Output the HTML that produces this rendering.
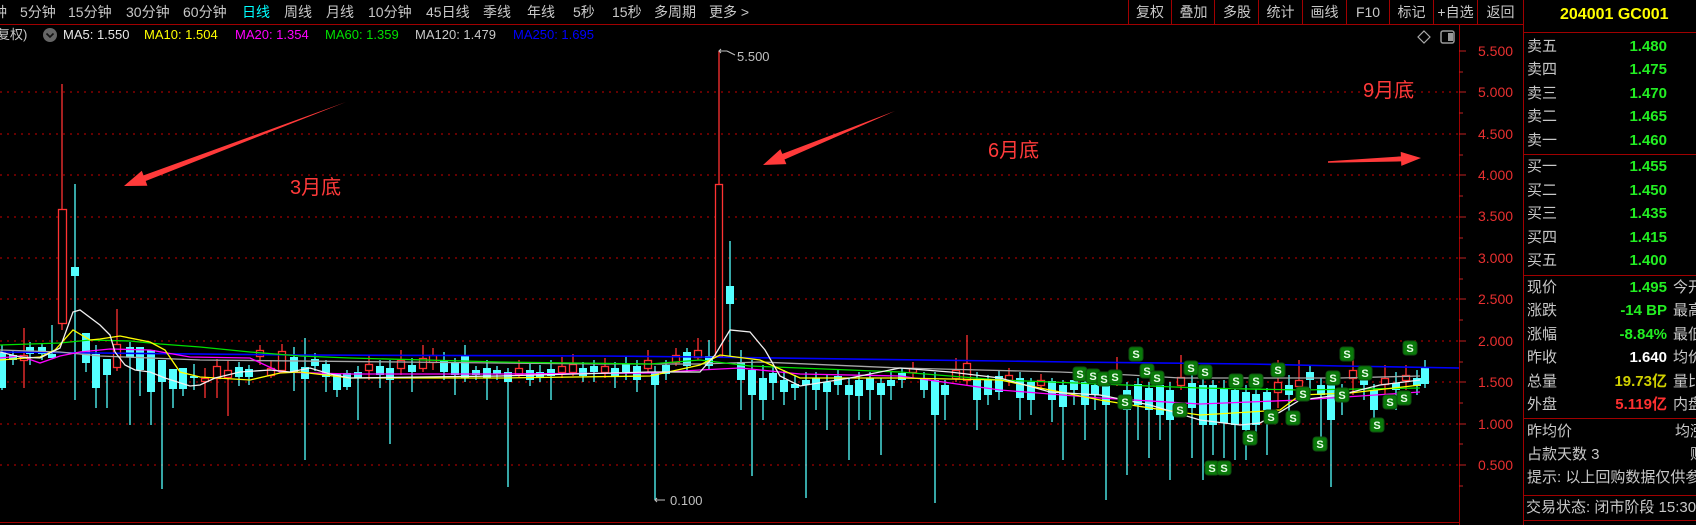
<!DOCTYPE html>
<html><head><meta charset="utf-8"><style>
html,body{margin:0;padding:0;background:#000;width:1696px;height:525px;overflow:hidden;font-family:"Liberation Sans","Noto Sans CJK SC","WenQuanYi Zen Hei",sans-serif}
.t{position:absolute;white-space:nowrap;line-height:1}
.tb{font-size:14px;color:#c8c8c8;top:5px}
.ma{font-size:13px;top:28px}
.pl{font-size:15px;color:#c8c8c8;left:1527px}
.pv{font-size:15px;font-weight:bold;color:#22ee22;text-align:right;width:140px;left:1527px}
.ax{font-size:14px;color:#e83030;left:1478px}
.btn{position:absolute;top:0;height:24px;border-left:1px solid #a00000;color:#c8c8c8;font-size:14px;line-height:24px;text-align:center}
</style></head><body>
<svg width="1696" height="525" style="position:absolute;left:0;top:0">
<g stroke="#a00000" stroke-width="1">
<line x1="0" y1="24.5" x2="1523" y2="24.5"/>
<line x1="1459.5" y1="24" x2="1459.5" y2="525"/>
<line x1="1523.5" y1="0" x2="1523.5" y2="525"/>
<line x1="1523" y1="32.5" x2="1696" y2="32.5"/>
<line x1="1523" y1="154.5" x2="1696" y2="154.5"/>
<line x1="1523" y1="275.5" x2="1696" y2="275.5"/>
<line x1="1523" y1="418.5" x2="1696" y2="418.5"/>
<line x1="1523" y1="495.5" x2="1696" y2="495.5"/>
<line x1="1523" y1="520.5" x2="1696" y2="520.5"/>
<line x1="0" y1="522.5" x2="1459" y2="522.5"/>
</g>
<g stroke="#a00000" stroke-width="1.3" stroke-dasharray="2 5">
<line x1="0" y1="92" x2="1459" y2="92"/><line x1="0" y1="134" x2="1459" y2="134"/>
<line x1="0" y1="175" x2="1459" y2="175"/><line x1="0" y1="217" x2="1459" y2="217"/>
<line x1="0" y1="258" x2="1459" y2="258"/><line x1="0" y1="299" x2="1459" y2="299"/>
<line x1="0" y1="341" x2="1459" y2="341"/><line x1="0" y1="382" x2="1459" y2="382"/>
<line x1="0" y1="424" x2="1459" y2="424"/><line x1="0" y1="465" x2="1459" y2="465"/>
</g>
<path stroke="#c02020" stroke-width="1" d="M1459 51h7M1459 92h7M1459 134h7M1459 175h7M1459 217h7M1459 258h7M1459 299h7M1459 341h7M1459 382h7M1459 424h7M1459 465h7M1459 72h4M1459 113h4M1459 155h4M1459 196h4M1459 238h4M1459 279h4M1459 320h4M1459 362h4M1459 403h4M1459 444h4M1459 486h4"/>
<path stroke="#54ffff" stroke-width="1.3" d="M2 345V390M13 350V365M30 342V365M42 344V360M52 325V358M75 184V400M86 333V372M96 345V408M107 359V408M130 342V425M140 347V396M151 350V425M162 360V489M173 369V408M183 368V396M194 364V390M239 362V386M249 365V385M294 347V391M305 338V460M315 353V371M326 360V392M337 374V397M347 370V390M358 366V420M380 360V388M390 360V444M412 358V392M444 352V380M455 358V395M465 345V382M476 366V380M487 360V400M497 366V380M508 368V487M530 364V386M540 365V382M551 360V400M583 362V382M594 360V382M615 362V388M626 356V380M637 360V392M655 366V500M666 360V380M687 348V372M709 340V370M730 241V357M741 350V410M752 360V476M763 365V420M773 365V400M784 370V405M795 375V400M806 372V498M816 372V410M827 375V430M838 370V395M849 378V460M859 372V420M870 372V420M881 378V455M891 372V400M902 368V388M924 372V398M935 372V503M945 380V420M977 372V430M988 375V405M999 370V400M1020 372V420M1031 378V415M1052 378V422M1063 380V460M1074 374V405M1085 375V440M1095 380V410M1106 380V500M1127 382V475M1138 378V440M1149 382V458M1160 378V440M1170 382V480M1192 375V458M1203 378V480M1213 380V455M1224 380V458M1235 382V460M1246 385V460M1256 385V435M1267 388V455M1289 375V420M1310 366V395M1321 378V440M1331 378V487M1342 384V415M1364 366V400M1374 384V430M1396 372V410M1417 370V395M1425 360V388"/>
<g fill="#54ffff">
<rect x="-2" y="352" width="8" height="36"/><rect x="9" y="355" width="8" height="5"/><rect x="26" y="347" width="8" height="7"/><rect x="38" y="347" width="8" height="7"/><rect x="48" y="354" width="8" height="4"/><rect x="71" y="267" width="8" height="9"/><rect x="82" y="333" width="8" height="30"/><rect x="92" y="354" width="8" height="34"/><rect x="103" y="359" width="8" height="16"/><rect x="126" y="347" width="8" height="10"/><rect x="136" y="347" width="8" height="23"/><rect x="147" y="350" width="8" height="42"/><rect x="158" y="360" width="8" height="22"/><rect x="169" y="369" width="8" height="20"/><rect x="179" y="368" width="8" height="21"/><rect x="190" y="376" width="8" height="2"/><rect x="235" y="367" width="8" height="10"/><rect x="245" y="369" width="8" height="8"/><rect x="290" y="357" width="8" height="15"/><rect x="301" y="367" width="8" height="12"/><rect x="311" y="359" width="8" height="7"/><rect x="322" y="364" width="8" height="13"/><rect x="333" y="374" width="8" height="16"/><rect x="343" y="373" width="8" height="14"/><rect x="354" y="372" width="8" height="6"/><rect x="376" y="366" width="8" height="9"/><rect x="386" y="368" width="8" height="12"/><rect x="408" y="365" width="8" height="7"/><rect x="440" y="360" width="8" height="12"/><rect x="451" y="362" width="8" height="13"/><rect x="461" y="355" width="8" height="23"/><rect x="472" y="370" width="8" height="5"/><rect x="483" y="368" width="8" height="10"/><rect x="493" y="370" width="8" height="4"/><rect x="504" y="372" width="8" height="10"/><rect x="526" y="370" width="8" height="10"/><rect x="536" y="372" width="8" height="6"/><rect x="547" y="369" width="8" height="7"/><rect x="579" y="368" width="8" height="8"/><rect x="590" y="366" width="8" height="6"/><rect x="611" y="368" width="8" height="8"/><rect x="622" y="364" width="8" height="8"/><rect x="633" y="366" width="8" height="14"/><rect x="651" y="372" width="8" height="13"/><rect x="662" y="365" width="8" height="9"/><rect x="683" y="352" width="8" height="14"/><rect x="705" y="356" width="8" height="10"/><rect x="726" y="286" width="8" height="18"/><rect x="737" y="362" width="8" height="18"/><rect x="748" y="370" width="8" height="25"/><rect x="759" y="378" width="8" height="22"/><rect x="769" y="373" width="8" height="10"/><rect x="780" y="380" width="8" height="12"/><rect x="791" y="384" width="8" height="4"/><rect x="802" y="380" width="8" height="5"/><rect x="812" y="378" width="8" height="12"/><rect x="823" y="382" width="8" height="10"/><rect x="834" y="376" width="8" height="9"/><rect x="845" y="385" width="8" height="10"/><rect x="855" y="380" width="8" height="16"/><rect x="866" y="378" width="8" height="12"/><rect x="877" y="383" width="8" height="12"/><rect x="887" y="380" width="8" height="6"/><rect x="898" y="373" width="8" height="7"/><rect x="920" y="378" width="8" height="12"/><rect x="931" y="380" width="8" height="35"/><rect x="941" y="385" width="8" height="10"/><rect x="973" y="380" width="8" height="20"/><rect x="984" y="380" width="8" height="15"/><rect x="995" y="376" width="8" height="16"/><rect x="1016" y="378" width="8" height="20"/><rect x="1027" y="382" width="8" height="18"/><rect x="1048" y="381" width="8" height="19"/><rect x="1059" y="385" width="8" height="22"/><rect x="1070" y="380" width="8" height="10"/><rect x="1081" y="382" width="8" height="23"/><rect x="1091" y="385" width="8" height="10"/><rect x="1102" y="386" width="8" height="19"/><rect x="1123" y="390" width="8" height="20"/><rect x="1134" y="384" width="8" height="21"/><rect x="1145" y="388" width="8" height="22"/><rect x="1156" y="385" width="8" height="30"/><rect x="1166" y="390" width="8" height="30"/><rect x="1188" y="383" width="8" height="25"/><rect x="1199" y="385" width="8" height="40"/><rect x="1209" y="385" width="8" height="40"/><rect x="1220" y="388" width="8" height="35"/><rect x="1231" y="390" width="8" height="35"/><rect x="1242" y="392" width="8" height="38"/><rect x="1252" y="394" width="8" height="31"/><rect x="1263" y="392" width="8" height="18"/><rect x="1285" y="385" width="8" height="10"/><rect x="1306" y="372" width="8" height="8"/><rect x="1317" y="385" width="8" height="10"/><rect x="1327" y="382" width="8" height="38"/><rect x="1338" y="388" width="8" height="12"/><rect x="1360" y="375" width="8" height="10"/><rect x="1370" y="390" width="8" height="20"/><rect x="1392" y="383" width="8" height="7"/><rect x="1413" y="378" width="8" height="8"/><rect x="1421" y="368" width="8" height="16"/>
</g>
<path stroke="#ff3232" stroke-width="1.3" d="M24 328V388M62 84V209M62 323V330M205 368V398M217 359V398M228 360V416M260 345V365M271 360V378M282 344V370M117 309V371M369 355V380M401 350V375M423 345V372M433 348V370M519 360V378M562 357V378M573 354V376M605 358V378M648 350V372M676 348V366M698 338V360M719 51V184M913 362V378M956 358V382M967 335V385M1009 368V386M1041 374V390M1117 357V386M1181 355V390M1278 360V408M1299 360V392M1353 350V395M1385 365V395M1406 365V390"/>
<g fill="#000" stroke="#ff3232" stroke-width="1.3">
<rect x="20.5" y="355.5" width="7" height="5"/><rect x="58.5" y="209.5" width="8" height="114"/><rect x="201.5" y="378.5" width="7" height="3"/><rect x="213.5" y="366.5" width="7" height="12"/><rect x="224.5" y="370.5" width="7" height="7"/><rect x="256.5" y="350.5" width="7" height="6"/><rect x="267.5" y="368.5" width="7" height="7"/><rect x="278.5" y="351.5" width="7" height="19"/><rect x="113.5" y="344.5" width="7" height="23"/><rect x="365.5" y="364.5" width="7" height="6"/><rect x="397.5" y="360.5" width="7" height="8"/><rect x="419.5" y="358.5" width="7" height="10"/><rect x="429.5" y="355.5" width="7" height="7"/><rect x="515.5" y="368.5" width="7" height="6"/><rect x="558.5" y="366.5" width="7" height="6"/><rect x="569.5" y="364.5" width="7" height="8"/><rect x="601.5" y="366.5" width="7" height="6"/><rect x="644.5" y="360.5" width="7" height="8"/><rect x="672.5" y="355.5" width="7" height="7"/><rect x="694.5" y="350.5" width="7" height="7"/><rect x="715.5" y="184.5" width="7" height="172"/><rect x="909.5" y="368.5" width="7" height="4"/><rect x="952.5" y="370.5" width="7" height="8"/><rect x="963.5" y="363.5" width="7" height="17"/><rect x="1005.5" y="375.5" width="7" height="5"/><rect x="1037.5" y="380.5" width="7" height="5"/><rect x="1113.5" y="372.5" width="7" height="6"/><rect x="1177.5" y="377.5" width="7" height="8"/><rect x="1274.5" y="382.5" width="7" height="10"/><rect x="1295.5" y="380.5" width="7" height="6"/><rect x="1349.5" y="370.5" width="7" height="8"/><rect x="1381.5" y="378.5" width="7" height="6"/><rect x="1402.5" y="375.5" width="7" height="5"/>
</g>
<g fill="none" stroke-width="1.3">
<polyline stroke="#0000ff" stroke-width="1.6" points="0,352 300,355 600,356 700,357 1000,361 1070,362 1250,364 1340,366 1459,368"/>
<polyline stroke="#a8a8a8" points="0,350 60,352 100,356 200,360 400,362 600,364 700,364 760,362 900,368 980,370 1060,372 1130,375 1180,378 1250,378 1340,378 1420,376"/>
<polyline stroke="#00e000" points="0,345 60,343 90,340 130,341 160,344 200,347 250,352 300,356 350,358 500,362 650,364 700,360 750,366 900,372 1000,380 1100,384 1200,388 1300,390 1420,388"/>
<polyline stroke="#ff00ff" points="0,358 20,356 40,363 60,356 80,352 110,349 150,350 190,357 250,358 280,372 350,374 500,374 650,373 700,370 740,368 800,374 900,376 1000,390 1100,398 1200,404 1300,400 1420,392"/>
<polyline stroke="#ffff00" points="0,360 40,357 55,350 73,330 90,340 100,339 120,336 150,342 165,350 180,372 200,377 250,380 280,373 300,372 350,378 500,378 650,376 700,365 720,355 760,360 800,378 900,378 1000,380 1050,390 1100,400 1150,408 1200,415 1250,412 1280,410 1300,395 1350,393 1420,385"/>
<polyline stroke="#f0f0f0" points="0,352 20,357 40,358 60,348 73,312 80,310 100,325 110,335 115,352 125,365 135,370 150,372 165,378 190,386 200,385 215,378 240,372 270,370 290,372 310,368 330,374 350,378 500,376 650,372 700,372 715,355 730,330 750,332 765,350 780,376 800,386 850,378 900,368 950,372 1000,378 1050,392 1100,395 1150,405 1200,420 1240,425 1260,423 1280,412 1300,400 1340,395 1380,385 1420,380"/>
</g>
<g fill="#0a7a0a" stroke="#0f4f0f" stroke-width="1">
<rect x="1073" y="367" width="14" height="14" rx="3"/><rect x="1086" y="369" width="14" height="14" rx="3"/><rect x="1097" y="372" width="14" height="14" rx="3"/><rect x="1108" y="370" width="14" height="14" rx="3"/><rect x="1118" y="395" width="14" height="14" rx="3"/><rect x="1129" y="347" width="14" height="14" rx="3"/><rect x="1140" y="364" width="14" height="14" rx="3"/><rect x="1150" y="371" width="14" height="14" rx="3"/><rect x="1173" y="403" width="14" height="14" rx="3"/><rect x="1184" y="361" width="14" height="14" rx="3"/><rect x="1198" y="365" width="14" height="14" rx="3"/><rect x="1205" y="461" width="14" height="14" rx="3"/><rect x="1217" y="461" width="14" height="14" rx="3"/><rect x="1229" y="374" width="14" height="14" rx="3"/><rect x="1243" y="431" width="14" height="14" rx="3"/><rect x="1249" y="374" width="14" height="14" rx="3"/><rect x="1264" y="410" width="14" height="14" rx="3"/><rect x="1271" y="363" width="14" height="14" rx="3"/><rect x="1286" y="411" width="14" height="14" rx="3"/><rect x="1296" y="387" width="14" height="14" rx="3"/><rect x="1313" y="437" width="14" height="14" rx="3"/><rect x="1326" y="371" width="14" height="14" rx="3"/><rect x="1335" y="388" width="14" height="14" rx="3"/><rect x="1340" y="347" width="14" height="14" rx="3"/><rect x="1358" y="366" width="14" height="14" rx="3"/><rect x="1370" y="418" width="14" height="14" rx="3"/><rect x="1383" y="395" width="14" height="14" rx="3"/><rect x="1397" y="391" width="14" height="14" rx="3"/><rect x="1403" y="341" width="14" height="14" rx="3"/>
</g>
<g fill="#e8ffe8" font-family="Liberation Sans,sans-serif" font-size="11" font-weight="bold" text-anchor="middle">
<text x="1080" y="378">S</text><text x="1093" y="380">S</text><text x="1104" y="383">S</text><text x="1115" y="381">S</text><text x="1125" y="406">S</text><text x="1136" y="358">S</text><text x="1147" y="375">S</text><text x="1157" y="382">S</text><text x="1180" y="414">S</text><text x="1191" y="372">S</text><text x="1205" y="376">S</text><text x="1212" y="472">S</text><text x="1224" y="472">S</text><text x="1236" y="385">S</text><text x="1250" y="442">S</text><text x="1256" y="385">S</text><text x="1271" y="421">S</text><text x="1278" y="374">S</text><text x="1293" y="422">S</text><text x="1303" y="398">S</text><text x="1320" y="448">S</text><text x="1333" y="382">S</text><text x="1342" y="399">S</text><text x="1347" y="358">S</text><text x="1365" y="377">S</text><text x="1377" y="429">S</text><text x="1390" y="406">S</text><text x="1404" y="402">S</text><text x="1410" y="352">S</text>
</g>
<g fill="#ff3a3a">
<polygon points="346,102 145.7,181 147.4,185.7 124,186 141.8,170.7 143.5,175.4"/>
<polygon points="895,111 784.5,159.5 786.4,164.1 763,165 780.4,149.3 782.3,153.9"/>
<polygon points="1328,162.7 1401.1,161.4 1401.3,165.9 1421,158 1400.7,151.9 1400.9,156.4 1328,161.3"/>
</g>
<path d="M719 51h8M721 49l-2 2 2 2M727 51l8 4" stroke="#c0c0c0" fill="none" stroke-width="1"/>
<path d="M655 500h10M657 498l-2 2 2 2" stroke="#c0c0c0" fill="none" stroke-width="1"/>
<path d="M1424 31l6 6-6 6-6-6z" fill="none" stroke="#aaa" stroke-width="1.2"/>
<rect x="1441" y="31" width="13" height="12" rx="2" fill="none" stroke="#999" stroke-width="1.5"/><rect x="1448" y="33" width="5" height="8" fill="#999"/>
<circle cx="50" cy="35" r="7" fill="#666"/><path d="M46.5 33.5l3.5 3.5 3.5-3.5" stroke="#111" stroke-width="1.6" fill="none"/>
</svg>

<div class="t tb" style="left:-7px">钟</div>
<div class="t tb" style="left:20px">5分钟</div>
<div class="t tb" style="left:68px">15分钟</div>
<div class="t tb" style="left:126px">30分钟</div>
<div class="t tb" style="left:183px">60分钟</div>
<div class="t tb" style="left:242px;color:#00ffff">日线</div>
<div class="t tb" style="left:284px">周线</div>
<div class="t tb" style="left:326px">月线</div>
<div class="t tb" style="left:368px">10分钟</div>
<div class="t tb" style="left:426px">45日线</div>
<div class="t tb" style="left:483px">季线</div>
<div class="t tb" style="left:527px">年线</div>
<div class="t tb" style="left:573px">5秒</div>
<div class="t tb" style="left:612px">15秒</div>
<div class="t tb" style="left:654px">多周期</div>
<div class="t tb" style="left:709px">更多 &gt;</div>

<div class="btn" style="left:1128px;width:42px">复权</div>
<div class="btn" style="left:1171px;width:43px">叠加</div>
<div class="btn" style="left:1214px;width:44px">多股</div>
<div class="btn" style="left:1258px;width:43px">统计</div>
<div class="btn" style="left:1302px;width:43px">画线</div>
<div class="btn" style="left:1346px;width:42px">F10</div>
<div class="btn" style="left:1389px;width:43px">标记</div>
<div class="btn" style="left:1433px;width:43px">+自选</div>
<div class="btn" style="left:1477px;width:45px">返回</div>

<div class="t ma" style="left:-3px;color:#c8c8c8">复权)</div>
<div class="t ma" style="left:63px;color:#e8e8e8">MA5: 1.550</div>
<div class="t ma" style="left:144px;color:#ffff00">MA10: 1.504</div>
<div class="t ma" style="left:235px;color:#ff00ff">MA20: 1.354</div>
<div class="t ma" style="left:325px;color:#00e000">MA60: 1.359</div>
<div class="t ma" style="left:415px;color:#c8c8c8">MA120: 1.479</div>
<div class="t ma" style="left:513px;color:#0000ff">MA250: 1.695</div>

<div class="t" style="left:290px;top:178px;font-size:20px;color:#ff3a3a">3月底</div>
<div class="t" style="left:988px;top:141px;font-size:20px;color:#ff3a3a">6月底</div>
<div class="t" style="left:1363px;top:81px;font-size:20px;color:#ff3a3a">9月底</div>
<div class="t" style="left:737px;top:50px;font-size:13px;color:#c0c0c0">5.500</div>
<div class="t" style="left:670px;top:494px;font-size:13px;color:#c0c0c0">0.100</div>

<div class="t ax" style="top:44px">5.500</div><div class="t ax" style="top:85px">5.000</div>
<div class="t ax" style="top:127px">4.500</div><div class="t ax" style="top:168px">4.000</div>
<div class="t ax" style="top:209px">3.500</div><div class="t ax" style="top:251px">3.000</div>
<div class="t ax" style="top:292px">2.500</div><div class="t ax" style="top:334px">2.000</div>
<div class="t ax" style="top:375px">1.500</div><div class="t ax" style="top:417px">1.000</div>
<div class="t ax" style="top:458px">0.500</div>

<div class="t" style="left:1560px;top:7px;font-size:16px;font-weight:bold;color:#ffff00">204001 GC001</div>
<div style="position:absolute;left:1524px;top:33px;width:172px;height:492px;overflow:hidden">
<div style="position:absolute;left:-1524px;top:-33px;width:1696px;height:525px">
<div class="t pl" style="top:39px">卖五</div><div class="t pv" style="top:39px">1.480</div>
<div class="t pl" style="top:62px">卖四</div><div class="t pv" style="top:62px">1.475</div>
<div class="t pl" style="top:86px">卖三</div><div class="t pv" style="top:86px">1.470</div>
<div class="t pl" style="top:109px">卖二</div><div class="t pv" style="top:109px">1.465</div>
<div class="t pl" style="top:133px">卖一</div><div class="t pv" style="top:133px">1.460</div>
<div class="t pl" style="top:159px">买一</div><div class="t pv" style="top:159px">1.455</div>
<div class="t pl" style="top:183px">买二</div><div class="t pv" style="top:183px">1.450</div>
<div class="t pl" style="top:206px">买三</div><div class="t pv" style="top:206px">1.435</div>
<div class="t pl" style="top:230px">买四</div><div class="t pv" style="top:230px">1.415</div>
<div class="t pl" style="top:253px">买五</div><div class="t pv" style="top:253px">1.400</div>
<div class="t pl" style="top:280px">现价</div><div class="t pv" style="top:280px">1.495</div><div class="t pl" style="top:280px;left:1673px">今开</div>
<div class="t pl" style="top:303px">涨跌</div><div class="t pv" style="top:303px">-14 BP</div><div class="t pl" style="top:303px;left:1673px">最高</div>
<div class="t pl" style="top:327px">涨幅</div><div class="t pv" style="top:327px">-8.84%</div><div class="t pl" style="top:327px;left:1673px">最低</div>
<div class="t pl" style="top:350px">昨收</div><div class="t pv" style="top:350px;color:#fff">1.640</div><div class="t pl" style="top:350px;left:1673px">均价</div>
<div class="t pl" style="top:374px">总量</div><div class="t pv" style="top:374px;color:#d0d000">19.73亿</div><div class="t pl" style="top:374px;left:1673px">量比</div>
<div class="t pl" style="top:397px">外盘</div><div class="t pv" style="top:397px;color:#ff3030">5.119亿</div><div class="t pl" style="top:397px;left:1673px">内盘</div>
<div class="t pl" style="top:424px">昨均价</div><div class="t pl" style="top:424px;left:1675px">均涨</div>
<div class="t pl" style="top:447px">占款天数 3</div><div class="t pl" style="top:447px;left:1690px">赎</div>
<div class="t pl" style="top:470px">提示: 以上回购数据仅供参考</div>
<div class="t pl" style="top:500px;left:1526px">交易状态: 闭市阶段 15:30</div>
</div></div>
</body></html>
